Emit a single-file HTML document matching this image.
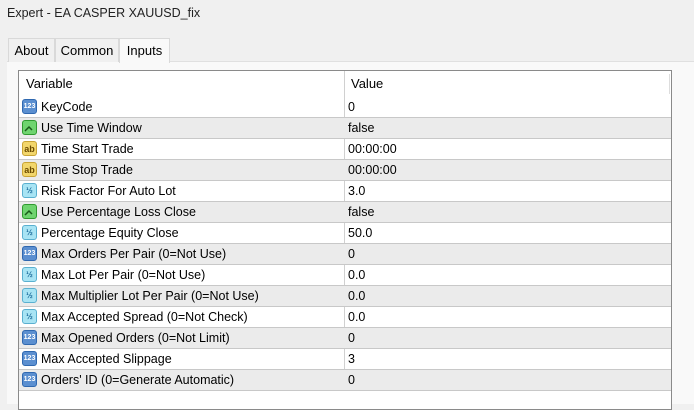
<!DOCTYPE html>
<html><head><style>
body{margin:0;width:694px;height:403px;overflow:hidden;background:#f0f0f0;font-family:"Liberation Sans",sans-serif;font-size:12px;color:#000;position:relative}
.title{position:absolute;left:7px;top:6px;font-size:12.5px;color:#222}
.tab{position:absolute;top:38px;height:24px;line-height:24px;font-size:13px;text-align:center;background:#f0f0f0;border:1px solid #d9d9d9;border-bottom:none;box-sizing:border-box}
.panel{position:absolute;left:7px;top:61px;width:687px;height:342px;background:#f9f9f9;border-top:1px solid #e0e0e0}
.tbl{position:absolute;left:18px;top:70px;width:654px;height:340px;background:#fff;border:1px solid #8a8a8a;box-sizing:border-box}
.hdr{position:absolute;left:0;top:0;width:652px;height:26px;line-height:26px;font-size:13px}
.row{position:absolute;left:0;width:652px;height:21px;line-height:21px;font-size:12.5px;border-bottom:1px solid #c8c8c8;box-sizing:border-box}
.g{background:#ebebeb}
.n{position:absolute;left:22px}
.v{position:absolute;left:329px}
.cl{position:absolute;left:325px;top:0;width:1px;height:320px;background:#d0d0d0}
.ic{position:absolute;left:3px;top:2px;width:15px;height:15px;border-radius:3px;box-sizing:border-box;font-size:7px;line-height:14px;text-align:center;font-weight:bold}
.i123{background:#5b8fd0;color:#fff;border:1px solid #2f68b0}
.iab{background:#f2d66b;color:#6a4a00;border:1px solid #c9a435;font-size:9px}
.ib{background:#6fd46f;border:1px solid #2f9a2f}
.if{background:#a8e4f4;color:#1a6a9a;border:1px solid #5ab0d0;font-size:8px}
</style></head><body>
<div class="title">Expert - EA CASPER XAUUSD_fix</div>
<div class="panel"></div>
<div class="tab" style="left:8px;width:47px">About</div>
<div class="tab" style="left:55px;width:64px">Common</div>
<div class="tab" style="left:119px;width:51px;background:#f9f9f9;height:25px">Inputs</div>
<div class="tbl">
<div class="hdr"><span style="position:absolute;left:7px">Variable</span><span style="position:absolute;left:332px">Value</span><div style="position:absolute;left:650px;top:3px;width:1px;height:20px;background:#ddd"></div></div>
<div class="cl"></div>
<div class="row" style="top:26px"><div class="ic i123">123</div><span class="n">KeyCode</span><span class="v">0</span></div>
<div class="row g" style="top:47px"><div class="ic ib"><svg width="13" height="13"><path d="M2 10 L6 6 L9 9" stroke="#1a5a1a" stroke-width="1.5" fill="none"/></svg></div><span class="n">Use Time Window</span><span class="v">false</span></div>
<div class="row" style="top:68px"><div class="ic iab">ab</div><span class="n">Time Start Trade</span><span class="v">00:00:00</span></div>
<div class="row g" style="top:89px"><div class="ic iab">ab</div><span class="n">Time Stop Trade</span><span class="v">00:00:00</span></div>
<div class="row" style="top:110px"><div class="ic if">½</div><span class="n">Risk Factor For Auto Lot</span><span class="v">3.0</span></div>
<div class="row g" style="top:131px"><div class="ic ib"><svg width="13" height="13"><path d="M2 10 L6 6 L9 9" stroke="#1a5a1a" stroke-width="1.5" fill="none"/></svg></div><span class="n">Use Percentage Loss Close</span><span class="v">false</span></div>
<div class="row" style="top:152px"><div class="ic if">½</div><span class="n">Percentage Equity Close</span><span class="v">50.0</span></div>
<div class="row g" style="top:173px"><div class="ic i123">123</div><span class="n">Max Orders Per Pair (0=Not Use)</span><span class="v">0</span></div>
<div class="row" style="top:194px"><div class="ic if">½</div><span class="n">Max Lot Per Pair (0=Not Use)</span><span class="v">0.0</span></div>
<div class="row g" style="top:215px"><div class="ic if">½</div><span class="n">Max Multiplier Lot Per Pair (0=Not Use)</span><span class="v">0.0</span></div>
<div class="row" style="top:236px"><div class="ic if">½</div><span class="n">Max Accepted Spread (0=Not Check)</span><span class="v">0.0</span></div>
<div class="row g" style="top:257px"><div class="ic i123">123</div><span class="n">Max Opened Orders (0=Not Limit)</span><span class="v">0</span></div>
<div class="row" style="top:278px"><div class="ic i123">123</div><span class="n">Max Accepted Slippage</span><span class="v">3</span></div>
<div class="row g" style="top:299px"><div class="ic i123">123</div><span class="n">Orders' ID (0=Generate Automatic)</span><span class="v">0</span></div>
</div>
</body></html>
